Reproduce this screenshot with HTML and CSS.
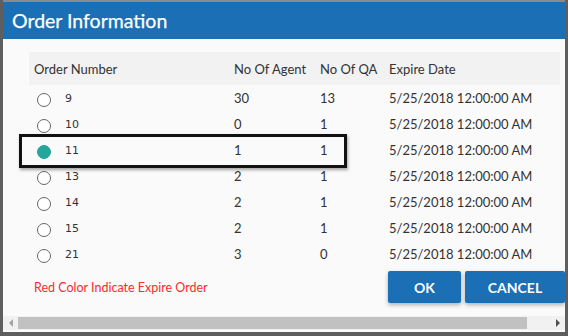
FILE: index.html
```html
<!DOCTYPE html>
<html>
<head>
<meta charset="utf-8">
<link rel="stylesheet" href="styles.css">
</head>
<body>
<div class="dialog">
  <div class="dlg-header">Order Information</div>
  <div class="dlg-content">
    <div class="grid">
      <div class="row head">
        <div class="cell c1">Order Number</div>
        <div class="cell">No Of Agent</div>
        <div class="cell">No Of QA</div>
        <div class="cell">Expire Date</div>
      </div>
      <div class="row">
        <div class="cell c1"><span class="radio"></span><span class="num">9</span></div>
        <div class="cell">30</div><div class="cell">13</div><div class="cell">5/25/2018 12:00:00 AM</div>
      </div>
      <div class="row">
        <div class="cell c1"><span class="radio"></span><span class="num">10</span></div>
        <div class="cell">0</div><div class="cell">1</div><div class="cell">5/25/2018 12:00:00 AM</div>
      </div>
      <div class="row selected">
        <div class="cell c1"><span class="radio on"></span><span class="num">11</span></div>
        <div class="cell">1</div><div class="cell">1</div><div class="cell">5/25/2018 12:00:00 AM</div>
      </div>
      <div class="row">
        <div class="cell c1"><span class="radio"></span><span class="num">13</span></div>
        <div class="cell">2</div><div class="cell">1</div><div class="cell">5/25/2018 12:00:00 AM</div>
      </div>
      <div class="row">
        <div class="cell c1"><span class="radio"></span><span class="num">14</span></div>
        <div class="cell">2</div><div class="cell">1</div><div class="cell">5/25/2018 12:00:00 AM</div>
      </div>
      <div class="row">
        <div class="cell c1"><span class="radio"></span><span class="num">15</span></div>
        <div class="cell">2</div><div class="cell">1</div><div class="cell">5/25/2018 12:00:00 AM</div>
      </div>
      <div class="row">
        <div class="cell c1"><span class="radio"></span><span class="num">21</span></div>
        <div class="cell">3</div><div class="cell">0</div><div class="cell">5/25/2018 12:00:00 AM</div>
      </div>
    </div>
    <div class="footer">
      <div class="note">Red Color Indicate Expire Order</div>
      <div class="buttons">
        <button class="btn ok">OK</button>
        <button class="btn cancel">CANCEL</button>
      </div>
    </div>
  </div>
  <div class="hscroll">
    <div class="arrow left"></div>
    <div class="track"><div class="thumb"></div></div>
    <div class="arrow right"></div>
  </div>
</div>
</body>
</html>
```

FILE: styles.css
```css
html, body {
  margin: 0;
  padding: 0;
}
body {
  width: 568px;
  height: 336px;
  overflow: hidden;
  background: #5e5e5e;
  box-sizing: border-box;
  padding: 2px 0 0 3px;
  font-family: Lato, "Liberation Sans", sans-serif;
  color: #333;
}
.dialog {
  width: 562px;
  height: 330px;
  background: #fafafa;
  display: flex;
  flex-direction: column;
  overflow: hidden;
  box-shadow: 0 -2px 0 #8a8a8a;
}
.dlg-header {
  height: 37px;
  flex: none;
  background: #1a6fb5;
  color: #fff;
  font-size: 19.5px;
  line-height: 37px;
  padding-left: 9px;
  -webkit-text-stroke: 0.25px #fff;
}
.dlg-content {
  flex: 1;
  padding: 13px 0 0 26px;
  display: flex;
  flex-direction: column;
}
.grid {
  width: 531px;
}
.row {
  display: grid;
  grid-template-columns: 205px 86px 69px 1fr;
  height: 26px;
  align-items: center;
  font-size: 13px;
  position: relative;
}
.row.head {
  height: 33px;
  background: #f2f2f2;
}
.head .c1 {
  padding-left: 5px;
}
.cell {
  white-space: nowrap;
}
.c1 {
  display: flex;
  align-items: center;
}
.radio {
  width: 12px;
  height: 12px;
  border: 1px solid #666;
  border-radius: 50%;
  margin-left: 8px;
  margin-top: 3px;
  background: #fff;
  flex: none;
}
.radio.on {
  border-color: #26a69a;
  background: #26a69a;
}
.num {
  font-family: "DejaVu Sans", Verdana, sans-serif;
  font-size: 11px;
  margin-left: 14px;
  color: #333;
}
.row.selected::after {
  content: "";
  position: absolute;
  left: -10px;
  top: -3px;
  width: 322px;
  height: 28px;
  border: 3px solid #111;
  box-shadow: 1px 2px 3px rgba(0,0,0,0.35);
  pointer-events: none;
}
.footer {
  display: flex;
  align-items: center;
  margin-top: 4px;
  height: 32px;
}
.note {
  color: #fa2a2f;
  font-size: 12.5px;
  padding-left: 5px;
  margin-top: 1px;
}
.buttons {
  margin-left: auto;
  display: flex;
  gap: 4px;
}
.btn {
  height: 32px;
  border: 0;
  border-radius: 2px;
  background: #1a6fb5;
  color: #fff;
  font-family: Lato, "Liberation Sans", sans-serif;
  font-weight: 700;
  font-size: 14px;
  box-shadow: 0 2px 4px rgba(0,0,0,0.3);
  padding: 0;
}
.ok {
  width: 73px;
}
.cancel {
  width: 100px;
}
.hscroll {
  height: 14px;
  flex: none;
  background: #f1f1f1;
  display: flex;
  align-items: center;
  margin-bottom: 2px;
}
.arrow {
  width: 15px;
  height: 14px;
  flex: none;
  display: flex;
  align-items: center;
  justify-content: center;
}
.arrow::before {
  content: "";
  width: 0;
  height: 0;
  border-top: 4px solid transparent;
  border-bottom: 4px solid transparent;
}
.arrow.left::before {
  border-right: 4px solid #a3a3a3;
}
.arrow.right::before {
  border-left: 4px solid #505050;
}
.track {
  flex: 1;
  height: 12px;
  display: flex;
}
.thumb {
  width: 509px;
  height: 12px;
  background: #c1c1c1;
}
```
